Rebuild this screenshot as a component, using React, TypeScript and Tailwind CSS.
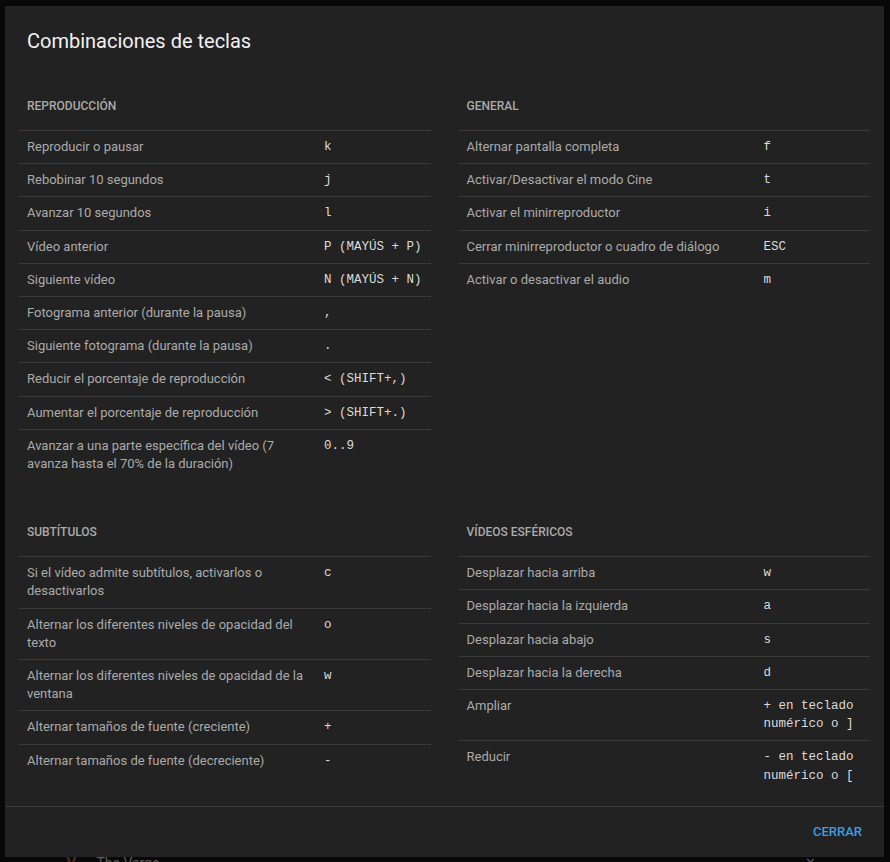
import React from 'react';

type Shortcut = { label: string; keys: string };
type Section = { title: string; items: Shortcut[] };

const sections: Section[] = [
  {
    title: 'Reproducción',
    items: [
      { label: 'Reproducir o pausar', keys: 'k' },
      { label: 'Rebobinar 10 segundos', keys: 'j' },
      { label: 'Avanzar 10 segundos', keys: 'l' },
      { label: 'Vídeo anterior', keys: 'P (MAYÚS + P)' },
      { label: 'Siguiente vídeo', keys: 'N (MAYÚS + N)' },
      { label: 'Fotograma anterior (durante la pausa)', keys: ',' },
      { label: 'Siguiente fotograma (durante la pausa)', keys: '.' },
      { label: 'Reducir el porcentaje de reproducción', keys: '< (SHIFT+,)' },
      { label: 'Aumentar el porcentaje de reproducción', keys: '> (SHIFT+.)' },
      { label: 'Avanzar a una parte específica del vídeo (7 avanza hasta el 70% de la duración)', keys: '0..9' },
    ],
  },
  {
    title: 'General',
    items: [
      { label: 'Alternar pantalla completa', keys: 'f' },
      { label: 'Activar/Desactivar el modo Cine', keys: 't' },
      { label: 'Activar el minirreproductor', keys: 'i' },
      { label: 'Cerrar minirreproductor o cuadro de diálogo', keys: 'ESC' },
      { label: 'Activar o desactivar el audio', keys: 'm' },
    ],
  },
  {
    title: 'Subtítulos',
    items: [
      { label: 'Si el vídeo admite subtítulos, activarlos o desactivarlos', keys: 'c' },
      { label: 'Alternar los diferentes niveles de opacidad del texto', keys: 'o' },
      { label: 'Alternar los diferentes niveles de opacidad de la ventana', keys: 'w' },
      { label: 'Alternar tamaños de fuente (creciente)', keys: '+' },
      { label: 'Alternar tamaños de fuente (decreciente)', keys: '-' },
    ],
  },
  {
    title: 'Vídeos esféricos',
    items: [
      { label: 'Desplazar hacia arriba', keys: 'w' },
      { label: 'Desplazar hacia la izquierda', keys: 'a' },
      { label: 'Desplazar hacia abajo', keys: 's' },
      { label: 'Desplazar hacia la derecha', keys: 'd' },
      { label: 'Ampliar', keys: '+ en teclado numérico o ]' },
      { label: 'Reducir', keys: '- en teclado numérico o [' },
    ],
  },
];

function ShortcutSection({ section }: { section: Section }) {
  return (
    <div>
      <h3 className="px-2 pt-6 pb-4 text-[12px] leading-4 font-medium uppercase text-[#aaaaaa]">
        {section.title}
      </h3>
      {section.items.map((item) => (
        <div key={item.label} className="flex border-t border-[#3a3a3a] pl-2 pr-1 py-[7px]">
          <div className="w-[297px] shrink-0 pr-4 text-[13px] leading-[18.2px] text-[#aaaaaa]">{item.label}</div>
          <div className="flex-1 text-[12.5px] leading-[18.2px] text-[#dcdcdc] font-['Liberation_Mono',monospace]">
            {item.keys}
          </div>
        </div>
      ))}
    </div>
  );
}

export default function App() {
  return (
    <div className="relative h-[862px] w-[890px] overflow-hidden bg-[#080808] font-['Roboto',sans-serif]">
      {/* page behind the overlay */}
      <div className="flex items-center pt-[851px] text-[14px] text-[#5a5a5a]">
        <span className="ml-[66px] text-[16px] font-bold text-[#5c2418]">V</span>
        <span className="ml-[20px]">The Verge</span>
        <span className="ml-auto mr-[74px] text-[13px]">✕</span>
      </div>

      {/* dialog */}
      <div className="absolute left-[5px] top-[6px] flex h-[851px] w-[879px] flex-col bg-[#222222]">
        <div className="flex-1 px-[14px]">
          <h2 className="px-2 pt-[21px] text-[20px] leading-7 text-[#f1f1f1]">Combinaciones de teclas</h2>
          <div className="mt-[19px] grid grid-cols-2 gap-x-[28px] gap-y-5">
            {sections.map((s) => (
              <ShortcutSection key={s.title} section={s} />
            ))}
          </div>
        </div>
        <div className="flex h-[51px] items-center justify-end border-t border-[#3a3a3a] pr-[22px]">
          <button className="text-[13px] font-medium uppercase text-[#3e9de0]">Cerrar</button>
        </div>
      </div>
    </div>
  );
}
